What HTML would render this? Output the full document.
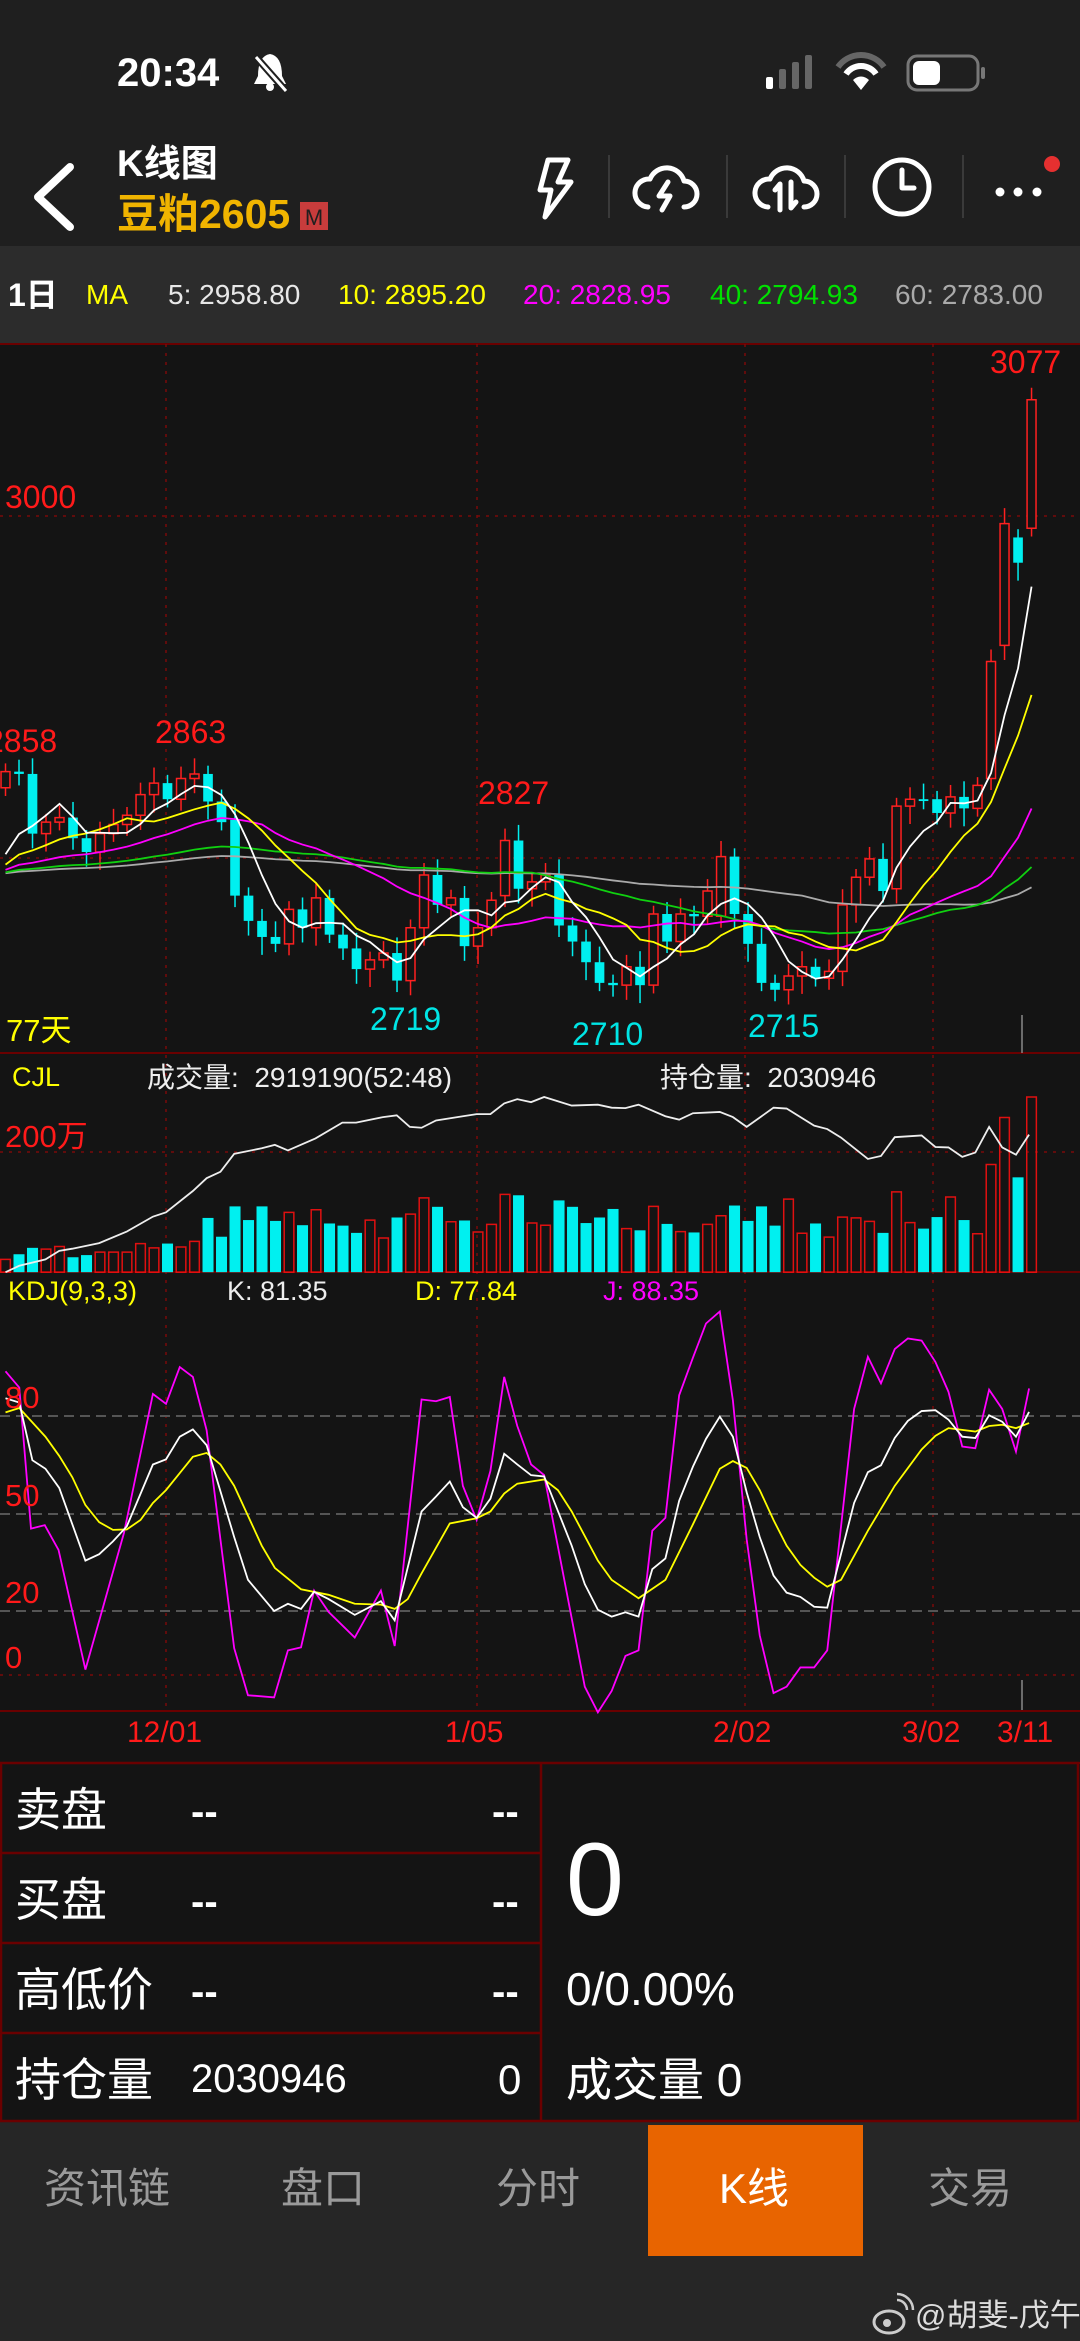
<!DOCTYPE html>
<html><head><meta charset="utf-8">
<style>
*{margin:0;padding:0;box-sizing:border-box}
body{width:1080px;height:2341px;background:#141414;font-family:"Liberation Sans","Noto Sans CJK SC",sans-serif;position:relative;overflow:hidden;color:#fff}
.a{position:absolute;white-space:nowrap;line-height:1}
#top{position:absolute;left:0;top:0;width:1080px;height:246px;background:#1f1f1f}
#ma{position:absolute;left:0;top:246px;width:1080px;height:97px;background:#2c2c2c}
#tabs{position:absolute;left:0;top:2121px;width:1080px;height:220px;background:#262626}
svg{position:absolute;left:0;top:0}
</style></head><body>
<div id="top"></div>
<div id="ma"></div>
<div id="tabs"></div>
<div style="position:absolute;left:648px;top:2125px;width:215px;height:131px;background:#e86400"></div>

<div class="a" style="left:117px;top:53px;font-size:40px;font-weight:bold">20:34</div>
<svg width="1080" height="246" viewBox="0 0 1080 246">
 <g fill="none" stroke="#fff" stroke-width="4">
  <path d="M258 76 q0-20 12-22 q12 2 12 22 l4 8 h-32z" fill="#fff" stroke="none"/>
  <circle cx="270" cy="87" r="4" fill="#fff" stroke="none"/>
  <path d="M256 57 l30 34" stroke="#1f1f1f" stroke-width="7"/>
  <path d="M256 57 l30 34" stroke-width="3"/>
 </g>
 <rect x="766" y="77" width="7" height="12" rx="2" fill="#fff"/>
 <rect x="779" y="69" width="7" height="20" rx="2" fill="#666"/>
 <rect x="792" y="62" width="7" height="27" rx="2" fill="#666"/>
 <rect x="805" y="55" width="7" height="34" rx="2" fill="#666"/>
 <path d="M838 67 a28 28 0 0 1 46 0" fill="none" stroke="#666" stroke-width="6"/>
 <path d="M846 74 a18 18 0 0 1 30 0" fill="none" stroke="#fff" stroke-width="6"/>
 <path d="M853 80 l8 10 l8-10 a11 11 0 0 0 -16 0z" fill="#fff"/>
 <rect x="908" y="56" width="70" height="34" rx="9" fill="none" stroke="#777" stroke-width="3"/>
 <rect x="913" y="61" width="27" height="24" rx="6" fill="#fff"/>
 <rect x="981" y="67" width="4" height="12" rx="2" fill="#777"/>
 <path d="M70 167 l-32 30 l32 30" fill="none" stroke="#fff" stroke-width="8" stroke-linecap="round" stroke-linejoin="round"/>
 <rect x="300" y="202" width="28" height="28" fill="#c83c3c"/>
 <text x="314" y="225" font-size="22" fill="#1f1f1f" text-anchor="middle" font-family="Liberation Sans">M</text>
 <g stroke="#3a3a3a" stroke-width="2"><path d="M609 155v63M727 155v63M845 155v63M963 155v63"/></g>
 <g fill="none" stroke="#fff" stroke-width="5" stroke-linejoin="round" stroke-linecap="round">
  <path d="M548 160 h20 l-10 22 h13 l-26 35 l6-27 h-11z"/>
  <path d="M648 207 a14 14 0 0 1 2-28 a18 18 0 0 1 34 2 a13 13 0 0 1 0 26"/>
  <path d="M668 182 l-9 14 h11 l-8 14" />
  <path d="M768 207 a14 14 0 0 1 2-28 a18 18 0 0 1 34 2 a13 13 0 0 1 0 26"/>
  <path d="M780 210 v-26 l-5 6 M791 182 v26 l5-6"/>
  <circle cx="902" cy="187" r="27"/>
  <path d="M902 170 v18 h12"/>
 </g>
 <g fill="#fff"><circle cx="1000" cy="192" r="4.5"/><circle cx="1018" cy="192" r="4.5"/><circle cx="1037" cy="192" r="4.5"/></g>
 <circle cx="1052" cy="164" r="8" fill="#e53030"/>
</svg>
<div class="a" style="left:117px;top:145px;font-size:37px;font-weight:bold">K线图</div>
<div class="a" style="left:117px;top:194px;font-size:41px;font-weight:bold;color:#f0b400">豆粕2605</div>

<div class="a" style="top:279px;left:8px;font-size:32px;font-weight:bold">1日</div>
<div class="a" style="top:281px;left:86px;font-size:28px;color:#ffff00">MA</div>
<div class="a" style="top:281px;left:168px;font-size:28px;color:#e8e8e8">5: 2958.80</div>
<div class="a" style="top:281px;left:338px;font-size:28px;color:#ffff00">10: 2895.20</div>
<div class="a" style="top:281px;left:523px;font-size:28px;color:#ff00ff">20: 2828.95</div>
<div class="a" style="top:281px;left:710px;font-size:28px;color:#00e000">40: 2794.93</div>
<div class="a" style="top:281px;left:895px;font-size:28px;color:#aaaaaa">60: 2783.00</div>

<svg id="ch" width="1080" height="2341" viewBox="0 0 1080 2341">
 <g stroke="#6a0000" stroke-width="2" fill="none">
  <path d="M0 344h1080M0 1053h1080M0 1272h1080M0 1711h1080M0 1763h1080"/>
 </g>
 <g stroke="#7a0a0a" stroke-width="1.5" stroke-dasharray="3 6" fill="none">
  <path d="M166 344v1367M477 344v1367M745 344v1367M933 344v1367"/>
  <path d="M0 516h1080M0 858h1080M0 1152h1080M0 1675h1080"/>
 </g>
 <g stroke="#555" stroke-width="2" stroke-dasharray="10 6" fill="none">
  <path d="M0 1416h1080M0 1514h1080M0 1611h1080"/>
 </g>
 <g id="k" transform="matrix(0.6888,0,0,0.4592,0,340)"></g>
 <g id="v" transform="matrix(0.6888,0,0,0.4273,0,1050)"></g>
 <path d="M1022 1015v38M1022 1680v30" stroke="#888" stroke-width="1.5"/>
</svg>

<div class="a" style="left:5px;top:481px;font-size:32px;color:#ff1a1a">3000</div>
<div class="a" style="left:990px;top:346px;font-size:32px;color:#ff1a1a">3077</div>
<div class="a" style="left:-14px;top:725px;font-size:32px;color:#ff1a1a">2858</div>
<div class="a" style="left:155px;top:716px;font-size:32px;color:#ff1a1a">2863</div>
<div class="a" style="left:478px;top:777px;font-size:32px;color:#ff1a1a">2827</div>
<div class="a" style="left:370px;top:1003px;font-size:32px;color:#00e5e5">2719</div>
<div class="a" style="left:572px;top:1018px;font-size:32px;color:#00e5e5">2710</div>
<div class="a" style="left:748px;top:1010px;font-size:32px;color:#00e5e5">2715</div>
<div class="a" style="left:6px;top:1015px;font-size:31px;color:#ffff00">77天</div>

<div class="a" style="left:12px;top:1064px;font-size:27px;color:#ffff00">CJL</div>
<div class="a" style="left:147px;top:1064px;font-size:28px;color:#eee">成交量:&nbsp; 2919190(52:48)</div>
<div class="a" style="left:660px;top:1064px;font-size:28px;color:#eee">持仓量:&nbsp; 2030946</div>
<div class="a" style="left:5px;top:1121px;font-size:31px;color:#ff1a1a">200万</div>

<div class="a" style="left:8px;top:1278px;font-size:27px;color:#ffff00">KDJ(9,3,3)</div>
<div class="a" style="left:227px;top:1278px;font-size:27px;color:#eee">K: 81.35</div>
<div class="a" style="left:415px;top:1278px;font-size:27px;color:#ffff00">D: 77.84</div>
<div class="a" style="left:603px;top:1278px;font-size:27px;color:#ff00ff">J: 88.35</div>
<div class="a" style="left:5px;top:1382px;font-size:31px;color:#ff1a1a">80</div>
<div class="a" style="left:5px;top:1480px;font-size:31px;color:#ff1a1a">50</div>
<div class="a" style="left:5px;top:1577px;font-size:31px;color:#ff1a1a">20</div>
<div class="a" style="left:5px;top:1642px;font-size:31px;color:#ff1a1a">0</div>

<div class="a" style="left:127px;top:1718px;font-size:30px;color:#ff1a1a">12/01</div>
<div class="a" style="left:445px;top:1718px;font-size:30px;color:#ff1a1a">1/05</div>
<div class="a" style="left:713px;top:1718px;font-size:30px;color:#ff1a1a">2/02</div>
<div class="a" style="left:902px;top:1718px;font-size:30px;color:#ff1a1a">3/02</div>
<div class="a" style="left:997px;top:1718px;font-size:30px;color:#ff1a1a">3/11</div>

<svg width="1080" height="2341" viewBox="0 0 1080 2341">
 <g stroke="#6a0000" stroke-width="2.5" fill="none">
  <rect x="1" y="1763" width="1077" height="358"/>
  <path d="M541 1763v358M0 1853h541M0 1943h541M0 2033h541"/>
 </g>
</svg>
<div class="a" style="left:15px;top:1787px;font-size:46px">卖盘</div>
<div class="a" style="left:15px;top:1877px;font-size:46px">买盘</div>
<div class="a" style="left:15px;top:1967px;font-size:46px">高低价</div>
<div class="a" style="left:15px;top:2057px;font-size:46px">持仓量</div>
<div class="a" style="left:191px;top:1792px;font-size:40px;font-weight:bold">--</div>
<div class="a" style="left:492px;top:1792px;font-size:40px;font-weight:bold">--</div>
<div class="a" style="left:191px;top:1882px;font-size:40px;font-weight:bold">--</div>
<div class="a" style="left:492px;top:1882px;font-size:40px;font-weight:bold">--</div>
<div class="a" style="left:191px;top:1972px;font-size:40px;font-weight:bold">--</div>
<div class="a" style="left:492px;top:1972px;font-size:40px;font-weight:bold">--</div>
<div class="a" style="left:191px;top:2059px;font-size:40px">2030946</div>
<div class="a" style="left:498px;top:2059px;font-size:42px">0</div>
<div class="a" style="left:566px;top:1828px;font-size:104px">0</div>
<div class="a" style="left:566px;top:1966px;font-size:46px">0/0.00%</div>
<div class="a" style="left:566px;top:2057px;font-size:46px">成交量 0</div>

<div class="a" style="left:44px;top:2168px;font-size:42px;color:#9a9a9a">资讯链</div>
<div class="a" style="left:281px;top:2168px;font-size:42px;color:#9a9a9a">盘口</div>
<div class="a" style="left:496px;top:2168px;font-size:42px;color:#9a9a9a">分时</div>
<div class="a" style="left:719px;top:2168px;font-size:42px;color:#fff">K线</div>
<div class="a" style="left:928px;top:2168px;font-size:42px;color:#9a9a9a">交易</div>
<svg width="1080" height="2341" viewBox="0 0 1080 2341">
 <ellipse cx="889" cy="2322" rx="15" ry="11" fill="none" stroke="#ccc" stroke-width="3"/>
 <circle cx="887" cy="2323" r="4" fill="#ccc"/>
 <path d="M897 2300 a10 10 0 0 1 10 10 M897 2294 a16 16 0 0 1 16 16" fill="none" stroke="#ccc" stroke-width="2.5"/>
</svg>
<div class="a" style="left:915px;top:2300px;font-size:31px;color:#ddd">@胡斐-戊午</div>

<script>
var C=[940,945,1075,1050,1040,1085,1115,1075,1055,1035,990,965,1000,955,945,1005,1050,1210,1265,1300,1315,1240,1280,1215,1295,1325,1370,1350,1335,1395,1280,1165,1230,1215,1320,1280,1220,1090,1195,1180,1165,1275,1310,1355,1400,1405,1365,1405,1250,1310,1250,1255,1200,1125,1250,1315,1400,1415,1385,1365,1390,1375,1230,1170,1130,1200,1015,1000,1000,1030,995,1020,970,700,400,485,130];
var O=[];for(var i=0;i<C.length;i++){O[i]=i?C[i-1]:975;}
O[73]=955;O[74]=665;O[75]=430;O[76]=410;O[66]=1195;O[17]=1045;O[37]=1210;O[53]=1255;
var NS='http://www.w3.org/2000/svg';
function el(p,t,a){var e=document.createElementNS(NS,t);for(var k in a)e.setAttribute(k,a[k]);p.appendChild(e);return e;}
var K=document.getElementById('k'),V=document.getElementById('v');
var X=function(i){return 8+i*19.6;};
for(var i=0;i<C.length;i++){
 var o=O[i],c=C[i],up=c<o,t=Math.min(o,c),b=Math.max(o,c);if(b-t<4){b=t+4;}
 var col=up?'#ff2020':'#00f0f0',x=X(i);
 el(K,'path',{d:'M'+x+' '+(t-18-(i%3)*8)+'V'+(b+18+(i%4)*7),stroke:col,'stroke-width':1.5,'vector-effect':'non-scaling-stroke'});
 if(up)el(K,'rect',{x:x-6.5,y:t,width:13,height:b-t,fill:'#141414',stroke:col,'stroke-width':1.5,'vector-effect':'non-scaling-stroke'});
 else el(K,'rect',{x:x-7,y:t,width:14,height:b-t,fill:col});
}
var pad=[];for(var j=0;j<60;j++)pad.push(1165);
var A=pad.concat(C);
function ma(n,col){var pts=[];for(var i=0;i<C.length;i++){var s=0;for(var j=0;j<n;j++)s+=A[60+i-j];pts.push(X(i)+','+(s/n).toFixed(1));}
 el(K,'polyline',{points:pts.join(' '),fill:'none',stroke:col,'stroke-width':1.8,'vector-effect':'non-scaling-stroke'});}
ma(60,'#aaaaaa');ma(40,'#10d010');ma(20,'#ff00ff');ma(10,'#ffff00');ma(5,'#ffffff');
var VT=[490,478,463,466,460,485,480,473,473,473,453,463,453,461,448,393,437,366,398,366,400,380,410,374,406,411,428,398,440,392,384,346,367,402,399,426,408,338,340,405,410,352,367,405,392,372,418,422,366,407,425,427,408,388,364,400,366,411,349,429,406,438,391,393,401,428,332,404,418,391,344,398,430,268,158,298,110];
for(var i=0;i<C.length;i++){var up=C[i]<O[i],x=X(i),t=VT[i];
 if(up)el(V,'rect',{x:x-7,y:t,width:14,height:520-t,fill:'none',stroke:'#e01010','stroke-width':1.5,'vector-effect':'non-scaling-stroke'});
 else el(V,'rect',{x:x-8,y:t,width:16,height:520-t,fill:'#00f0f0'});}
function pl(s,col){el(V,'polyline',{points:s,fill:'none',stroke:col,'stroke-width':1.8,'vector-effect':'non-scaling-stroke'});}
pl("8,520 28,505 66,490 86,470 105,465 144,452 184,425 222,390 241,380 280,330 300,300 320,285 340,243 380,230 399,222 418,235 458,207 497,170 517,170 556,157 576,153 595,180 612,182 633,165 672,155 692,150 712,150 732,125 751,115 771,122 790,110 830,130 868,128 888,135 908,136 927,128 966,155 986,163 1006,148 1045,145 1064,157 1084,180 1123,135 1142,137 1182,177 1201,185 1221,205 1260,255 1279,248 1299,204 1338,200 1358,227 1377,228 1397,250 1416,240 1436,180 1455,228 1475,245 1494,198",'#eeeeee');
pl("8,752 28,790 45,1120 65,1112 85,1170 124,1450 180,1130 222,805 241,828 261,742 280,765 300,890 340,1400 360,1510 398,1515 418,1405 437,1398 456,1265 477,1315 515,1375 553,1265 573,1395 612,818 633,822 653,812 672,1020 692,1100 712,985 732,765 751,880 771,970 790,995 830,1330 849,1490 868,1550 888,1500 908,1418 927,1405 947,1125 966,1095 986,808 1006,720 1025,640 1045,612 1064,820 1084,1145 1103,1370 1123,1505 1142,1490 1162,1445 1182,1445 1201,1405 1240,840 1260,718 1279,780 1299,700 1318,675 1338,680 1358,730 1377,800 1397,928 1416,932 1436,795 1455,840 1475,940 1494,792",'#ff00ff');
pl("8,848 28,838 66,905 86,950 105,1000 124,1065 144,1105 164,1123 184,1122 204,1100 222,1060 241,1030 261,990 280,952 300,943 320,970 340,1020 360,1090 380,1160 399,1212 437,1262 477,1275 515,1296 553,1298 573,1308 592,1285 612,1225 633,1165 653,1108 692,1096 712,1080 732,1038 751,1015 790,1005 810,1030 830,1080 868,1195 888,1240 927,1283 966,1240 1006,1110 1045,980 1064,962 1084,978 1103,1030 1123,1100 1142,1160 1162,1205 1182,1235 1201,1256 1221,1240 1260,1125 1299,1020 1338,935 1358,903 1377,885 1416,893 1436,880 1455,877 1475,885 1494,873",'#ffff00');
pl("8,815 28,825 47,960 66,980 86,1025 124,1195 144,1180 164,1150 184,1115 222,970 241,958 261,905 280,888 300,925 340,1140 360,1240 398,1313 418,1296 437,1308 456,1268 477,1285 515,1322 553,1290 573,1335 612,1080 633,1045 653,1010 672,1070 692,1095 712,1050 732,945 751,970 771,995 790,998 830,1160 849,1250 868,1310 888,1326 908,1316 927,1326 947,1215 966,1190 986,1055 1006,975 1025,910 1045,858 1064,905 1084,1035 1103,1140 1123,1230 1142,1270 1162,1280 1182,1303 1201,1305 1240,1060 1260,988 1279,972 1299,908 1318,868 1338,845 1358,843 1377,865 1397,905 1416,908 1436,855 1455,870 1475,905 1494,847",'#ffffff');
</script>
</body></html>
